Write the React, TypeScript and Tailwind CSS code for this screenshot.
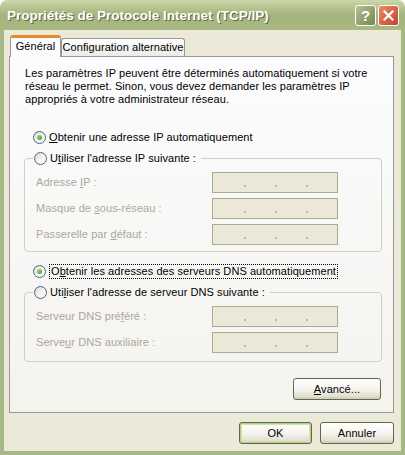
import React from "react";

const ui = { fontFamily: '"Liberation Sans", Arial, sans-serif' };

function Mn({ children }: { children: React.ReactNode }) {
  return <span className="underline underline-offset-[1px]">{children}</span>;
}

function Radio({ checked }: { checked?: boolean }) {
  return (
    <span className="flex h-[13px] w-[13px] shrink-0 items-center justify-center rounded-full border border-[#4d6185] bg-gradient-to-br from-[#dcd9c8] via-[#f4f3ee] to-white">
      {checked && (
        <span className="h-[5px] w-[5px] rounded-full bg-gradient-to-br from-[#a9dd7e] to-[#3e9a1d]" />
      )}
    </span>
  );
}

function IpBox() {
  return (
    <div className="flex h-[21px] w-[126px] items-start gap-[29px] border border-[#a8ad92] bg-[#ebe8d7] pl-[31px] pt-[12px]">
      <span className="h-[2px] w-[2px] bg-[#b9b6a6]" />
      <span className="h-[2px] w-[2px] bg-[#b9b6a6]" />
      <span className="h-[2px] w-[2px] bg-[#b9b6a6]" />
    </div>
  );
}

function Field({ label }: { label: React.ReactNode }) {
  return (
    <div className="flex items-center">
      <span className="w-[176px] text-[#aca899]">{label}</span>
      <IpBox />
    </div>
  );
}

function XpButton({ children, def, w }: { children: React.ReactNode; def?: boolean; w: string }) {
  return (
    <button
      className={`${w} flex h-[22px] items-center justify-center rounded-[3px] border border-[#5c6b44] bg-gradient-to-b from-white via-[#f5f4ee] to-[#dcd8c8] text-black ${
        def ? "shadow-[inset_0_0_0_1px_#b9cc8e,inset_0_0_0_2px_#d4e0b0]" : "shadow-[inset_0_-2px_0_#d6d0c0]"
      }`}
    >
      {children}
    </button>
  );
}

export default function App() {
  return (
    <div className="h-[455px] w-[405px] bg-white text-[11px] leading-[13px] tracking-[0.07px] text-black" style={ui}>
      {/* title bar */}
      <div className="flex h-[30px] items-center justify-between rounded-t-[7px] bg-gradient-to-b from-[#cdd6a8] via-[#a3b47c] to-[#a9b982] pl-[7px] pr-[6px]">
        <span className="text-[13.5px] font-bold tracking-normal text-white [text-shadow:1px_1px_0_#5d6b3e]">
          Propriétés de Protocole Internet (TCP/IP)
        </span>
        <div className="flex gap-[2px]">
          <div className="flex h-[21px] w-[21px] items-center justify-center rounded-[3px] border border-white bg-gradient-to-br from-[#b5c392] to-[#74874f] text-[15px] font-bold text-white">
            ?
          </div>
          <div className="flex h-[21px] w-[21px] items-center justify-center rounded-[3px] border border-white bg-gradient-to-br from-[#e9896a] to-[#c4442b]">
            <svg width="11" height="11" viewBox="0 0 11 11">
              <path d="M1.5 1.5 L9.5 9.5 M9.5 1.5 L1.5 9.5" stroke="white" strokeWidth="2.2" strokeLinecap="square" />
            </svg>
          </div>
        </div>
      </div>

      {/* body */}
      <div className="h-[425px] border-x-4 border-b-4 border-[#a7b887] bg-[#ece9d8] px-[5px] pt-[5px]">
        {/* tabs */}
        <div className="flex h-[21px] items-end pl-[1px]">
          <div className="relative top-[1px] z-10 flex h-[22px] w-[51px] items-center justify-center rounded-t-[3px] border-x border-[#919b9c] border-t-[3px] border-t-[#e68b2c] bg-[#fcfcfe] pb-[2px]">
            Général
          </div>
          <div className="flex h-[18px] w-[124px] items-center justify-center rounded-t-[3px] border-x border-t border-[#919b9c] bg-gradient-to-b from-white to-[#ecebe6]">
            Configuration alternative
          </div>
        </div>

        {/* panel */}
        <div className="flex h-[357px] w-[385px] flex-col border border-[#919b9c] bg-gradient-to-b from-[#fcfcfe] to-[#f4f3ee] pl-[14px] pr-[11px] pt-[10px]">
          <p className="ml-[1px]">
            Les paramètres IP peuvent être déterminés automatiquement si votre
            <br />
            réseau le permet. Sinon, vous devez demander les paramètres IP
            <br />
            appropriés à votre administrateur réseau.
          </p>

          <div className="ml-[9px] mt-[24px] flex h-[15px] items-center gap-[3px]">
            <Radio checked />
            <span>
              <Mn>O</Mn>btenir une adresse IP automatiquement
            </span>
          </div>

          <fieldset className="mt-[6px] h-[101px] rounded-[4px] border border-[#d0d0bf]">
            <legend className="ml-[8px] flex h-[15px] items-center gap-[3px] pl-[1px] pr-[5px]">
              <Radio />
              <span>
                U<Mn>t</Mn>iliser l'adresse IP suivante :
              </span>
            </legend>
            <div className="flex flex-col gap-[5px] pl-[11px] pt-[6px]">
              <Field label={<>Adresse <Mn>I</Mn>P :</>} />
              <Field label={<>Masque de <Mn>s</Mn>ous-réseau :</>} />
              <Field label={<>Passerelle par <Mn>d</Mn>éfaut :</>} />
            </div>
          </fieldset>

          <div className="ml-[9px] mt-[11px] flex h-[16px] items-center gap-[3px]">
            <Radio checked />
            <span className="border border-dotted border-black px-[1px]">
              O<Mn>b</Mn>tenir les adresses des serveurs DNS automatiquement
            </span>
          </div>

          <fieldset className="mt-[6px] h-[77px] rounded-[4px] border border-[#d0d0bf]">
            <legend className="ml-[8px] flex h-[15px] items-center gap-[3px] pl-[1px] pr-[5px]">
              <Radio />
              <span>
                Uti<Mn>l</Mn>iser l'adresse de serveur DNS suivante :
              </span>
            </legend>
            <div className="flex flex-col gap-[5px] pl-[11px] pt-[6px]">
              <Field label={<>Serveur DNS pré<Mn>f</Mn>éré :</>} />
              <Field label={<>Serve<Mn>u</Mn>r DNS auxiliaire :</>} />
            </div>
          </fieldset>

          <div className="mt-[16px] flex justify-end pr-[1px]">
            <XpButton w="w-[88px]">
              <span>
                <Mn>A</Mn>vancé...
              </span>
            </XpButton>
          </div>
        </div>

        {/* bottom buttons */}
        <div className="mt-[9px] flex justify-end gap-[8px] pr-[2px]">
          <XpButton w="w-[73px]" def>
            OK
          </XpButton>
          <XpButton w="w-[74px]">Annuler</XpButton>
        </div>
      </div>
    </div>
  );
}
